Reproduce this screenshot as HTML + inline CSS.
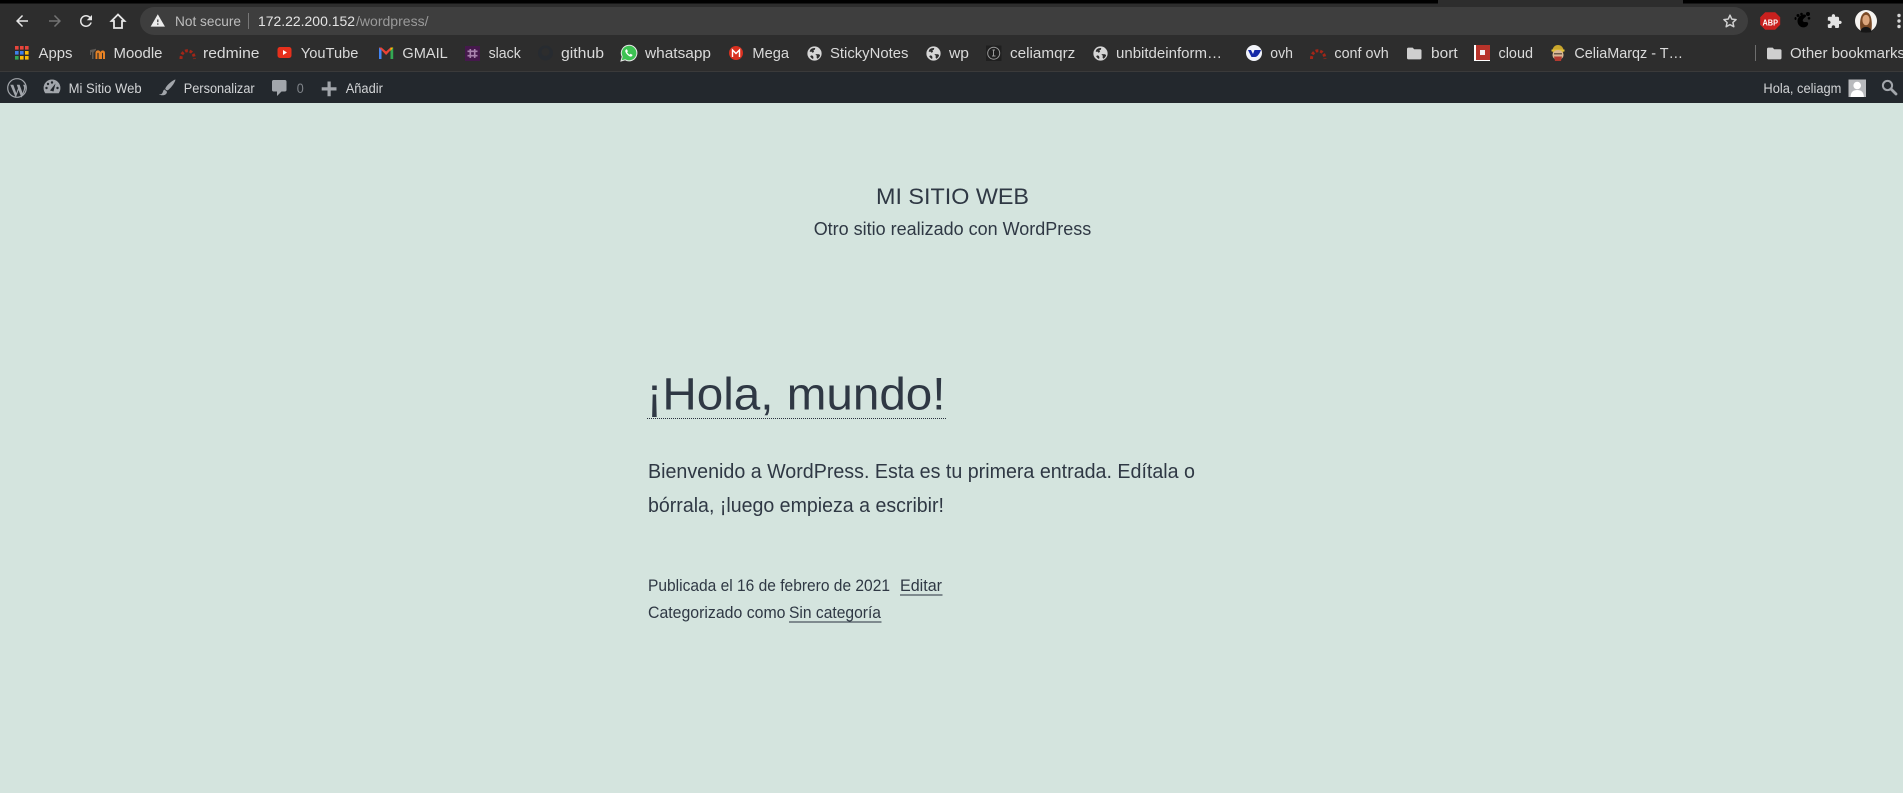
<!DOCTYPE html>
<html lang="es">
<head>
<meta charset="utf-8">
<title>Mi Sitio Web</title>
<style>
html,body{margin:0;padding:0;width:1903px;height:793px;overflow:hidden;background:#d4e4de}
svg{display:block}
text{font-family:"Liberation Sans",sans-serif;white-space:pre}
.b{font-size:14.5px;fill:#dadada}
.a{font-size:13.5px;fill:#d2d4d6}
.p{fill:#2f3844}
</style>
</head>
<body>
<svg width="1903" height="793" viewBox="0 0 1903 793" xmlns="http://www.w3.org/2000/svg">
<defs>
<symbol id="globe" viewBox="0 0 16 16"><circle cx="8" cy="8" r="7.6" fill="#d6d6d6"/><path d="M4 3.400C5.500 2.400 7.500 2 8.800 2.200L8.400 3.800 6.800 4.800 7.600 6.200 5.800 7.200 4.800 6 3 6.200C2.900 5.200 3.300 4.200 4 3.400ZM9.400 8.600l3.600.2 1 1.200c-.5 1.600-1.500 2.800-3 3.600l-.8-1.400.3-2-1.300-.8ZM4.400 10l2 .5.5 2-.5 1.300C5.200 13.300 4 12.300 3.400 11.100Z" fill="#2d2d2d"/></symbol>
<symbol id="folder" viewBox="0 0 16 14"><path d="M1.500 1h4.800l1.600 1.800h6.600c.8 0 1.500.6 1.500 1.400v8.300c0 .8-.7 1.500-1.500 1.500H1.500C.7 14 0 13.300 0 12.500v-10C0 1.700.7 1 1.500 1Z" fill="#cfcfcf"/></symbol>
</defs>

<!-- browser chrome -->
<rect width="1903" height="71" fill="#2d2d2d"/>
<rect width="1438" height="3.500" fill="#000"/>
<rect x="1683" width="220" height="3.500" fill="#000"/>
<rect x="140" y="7" width="1608" height="28" rx="14" fill="#3e3e3e"/>

<g fill="#e6e6e6">
<path transform="translate(13 12) scale(.75)" d="M20 11H7.830l5.590-5.590L12 4l-8 8 8 8 1.410-1.410L7.830 13H20v-2z"/>
<path transform="translate(64 12) scale(-.75 .75)" fill="#737373" d="M20 11H7.830l5.590-5.590L12 4l-8 8 8 8 1.410-1.410L7.830 13H20v-2z"/>
<path transform="translate(77 12) scale(.75)" d="M17.650 6.350C16.200 4.900 14.210 4 12 4c-4.420 0-7.990 3.580-7.990 8s3.570 8 7.990 8c3.730 0 6.840-2.550 7.730-6h-2.080c-.82 2.330-3.040 4-5.650 4-3.310 0-6-2.690-6-6s2.690-6 6-6c1.660 0 3.140.69 4.220 1.780L13 11h7V4l-2.350 2.350z"/>
</g>
<path d="M118 14.500 L111.500 21H114V28H122V21H124.500Z" fill="none" stroke="#e6e6e6" stroke-width="1.800" stroke-linejoin="miter"/>
<path transform="translate(150 13) scale(.65)" fill="#ececec" d="M1 21h22L12 2 1 21zm12-3h-2v-2h2v2zm0-4h-2v-4h2v4z"/>
<text x="175" y="26" textLength="66" lengthAdjust="spacingAndGlyphs" font-size="14" fill="#bdbdbd">Not secure</text>
<rect x="248" y="13" width="1" height="16" fill="#777"/>
<text x="258" y="26" textLength="97" lengthAdjust="spacingAndGlyphs" font-size="14" fill="#e4e4e4">172.22.200.152</text>
<text x="356" y="26" textLength="72.500" lengthAdjust="spacingAndGlyphs" font-size="14" fill="#9a9a9a">/wordpress/</text>
<path d="M1730 15.200l1.800 3.900 4.300.5-3.200 2.900.9 4.200-3.800-2.100-3.800 2.100.9-4.200-3.200-2.900 4.300-.5Z" fill="none" stroke="#d0d0d0" stroke-width="1.500" stroke-linejoin="round"/>

<!-- extensions -->
<path d="M1765 13h10l5 5v7.500l-5 5h-10l-5-5V18Z" fill="#c8201e" transform="translate(.2 -.8)"/>
<text x="1762.500" y="25.500" textLength="15.500" lengthAdjust="spacingAndGlyphs" font-size="8" font-weight="700" fill="#fff">ABP</text>
<g fill="#000">
<path d="M1797.500 21c0-3.500 3-6.500 7-6.500 1.500 0 2 1.500 1 2.500-2 1.500-3.500 3-2.300 4.500 1.200 1.200 3.200 0 4.500 1 1 1 .3 3.200-1.700 4.300-3.800 2-8.500-1-8.500-5.800Z"/>
<circle cx="1798" cy="15.500" r="1.500"/><circle cx="1801.500" cy="14" r="1.300"/><circle cx="1808" cy="14" r="2"/><circle cx="1809" cy="18.300" r="1.300"/><ellipse cx="1795.500" cy="18.500" rx="1" ry="1.500"/>
</g>
<path transform="translate(1826.500 13.500) scale(.66)" fill="#e4e4e4" d="M20.500 11H19V7c0-1.100-.9-2-2-2h-4V3.500C13 2.120 11.880 1 10.500 1S8 2.120 8 3.500V5H4c-1.100 0-1.990.9-1.990 2v3.800H3.500c1.490 0 2.700 1.210 2.700 2.700s-1.210 2.700-2.700 2.700H2V20c0 1.100.9 2 2 2h3.800v-1.500c0-1.490 1.210-2.700 2.700-2.700 1.490 0 2.700 1.210 2.700 2.700V22H17c1.100 0 2-.9 2-2v-4h1.500c1.380 0 2.500-1.120 2.500-2.500S21.880 11 20.500 11z"/>
<circle cx="1866" cy="21" r="11" fill="#f6f4f1"/>
<path d="M1860.500 30c-1-7-.8-16.500 5.500-18 6 1 6.300 11 5.500 18-2 1-9 1-11 0Z" fill="#7a4a26"/>
<ellipse cx="1866" cy="20" rx="3.600" ry="5.300" fill="#dca67c"/>
<path d="M1860.500 32c.5-4 2.800-5 5.500-5s5 1 5.500 5c-3 .8-8 .8-11 0Z" fill="#161616"/>
<g fill="#d8d8d8"><circle cx="1899" cy="15.500" r="1.700"/><circle cx="1899" cy="21" r="1.700"/><circle cx="1899" cy="26.500" r="1.700"/></g>

<!-- bookmarks bar -->
<g>
<g fill="#e8453c"><rect x="15" y="46" width="3.600" height="3.600"/><rect x="15" y="51" width="3.600" height="3.600" fill="#3f80ea"/><rect x="15" y="56" width="3.600" height="3.600" fill="#34a853"/><rect x="20" y="46" width="3.600" height="3.600"/><rect x="20" y="51" width="3.600" height="3.600" fill="#3f80ea"/><rect x="20" y="56" width="3.600" height="3.600" fill="#fbbc05"/><rect x="25" y="46" width="3.600" height="3.600"/><rect x="25" y="51" width="3.600" height="3.600" fill="#fbbc05"/><rect x="25" y="56" width="3.600" height="3.600" fill="#fbbc05"/></g>
<text class="b" x="38.500" y="58" textLength="34" lengthAdjust="spacingAndGlyphs">Apps</text>

<path d="M90 50 96 48.800v1.200L93.500 52.500V59H92V52.500L91 52V55H90Z" fill="#5f5a55"/>
<path d="M95.500 59v-6c0-3.500 5-3.500 5 0v6h-1.900v-5.500c0-1-1.200-1-1.200 0V59ZM100.300 59v-6c0-3 4.700-3.500 4.700 0v6h-2v-5.500c0-1-1-1-1 0V59Z" fill="#e58124"/>
<text class="b" x="113.500" y="58" textLength="49" lengthAdjust="spacingAndGlyphs">Moodle</text>

<path d="M181 59C181 48 194 48 194.500 59" fill="none" stroke="#a32618" stroke-width="3" stroke-dasharray="2.800 1.800"/>
<text class="b" x="203" y="58" textLength="56.500" lengthAdjust="spacingAndGlyphs">redmine</text>

<rect x="277.500" y="47" width="14" height="11" rx="2.500" fill="#e6301c"/><path d="M283 50l4 2.500-4 2.500Z" fill="#fff"/>
<text class="b" x="300.800" y="58" textLength="57.600" lengthAdjust="spacingAndGlyphs">YouTube</text>

<path d="M379 47.500h2.500V59H379Z" fill="#4285f4"/><path d="M390.500 47.500h2.700V59h-2.700Z" fill="#34a853"/><path d="M379 47.500h2.500l4.600 4 4.400-4h2.700l-7.100 7.500Z" fill="#ea4335"/><path d="M390.500 47.500h2.700l-2.700 3.500Z" fill="#fbbc05"/>
<text class="b" x="402.400" y="58" textLength="45.400" lengthAdjust="spacingAndGlyphs">GMAIL</text>

<rect x="465" y="46" width="15" height="15" fill="#45194c"/><path d="M470.300 49v9M474.700 49v9M467.500 51.300h10M467.500 55.700h10" stroke="#a984ae" stroke-width="1.600"/>
<text class="b" x="488.600" y="58" textLength="32.200" lengthAdjust="spacingAndGlyphs">slack</text>

<circle cx="545.500" cy="53" r="7.500" fill="#272b30"/><circle cx="545.500" cy="52" r="4" fill="#2d2d2d"/>
<text class="b" x="561" y="58" textLength="43" lengthAdjust="spacingAndGlyphs">github</text>

<path d="M621 61l1.200-4.300a7.800 7.800 0 1 1 3 3.100Z" fill="#3dc253" stroke="#e8e8e8" stroke-width="1"/>
<path d="M626 49.500c-1 .7-1 2 0 3.500s3 3.500 4.800 3.600c1.200 0 1.700-1 1.700-1.700l-1.900-1.100-.9.900c-1-.4-2-1.400-2.600-2.500l.8-.9-1-2.100Z" fill="#fff"/>
<text class="b" x="645" y="58" textLength="66" lengthAdjust="spacingAndGlyphs">whatsapp</text>

<circle cx="736" cy="53" r="7" fill="#d9301f"/><path d="M732.500 57v-7l3.500 3.500 3.500-3.500v7" fill="none" stroke="#fff" stroke-width="1.400"/>
<text class="b" x="752.400" y="58" textLength="36.600" lengthAdjust="spacingAndGlyphs">Mega</text>

<use href="#globe" x="807" y="46" width="15" height="15"/>
<text class="b" x="830" y="58" textLength="78.400" lengthAdjust="spacingAndGlyphs">StickyNotes</text>

<use href="#globe" x="926" y="46" width="15" height="15"/>
<text class="b" x="949" y="58" textLength="20" lengthAdjust="spacingAndGlyphs">wp</text>

<rect x="986" y="45.500" width="15.500" height="15.500" fill="#1f1f1f"/><circle cx="993.700" cy="53.200" r="6" fill="none" stroke="#9a9a9a"/><path d="M992.500 50h2.500M993.500 50v6M992 56h3.500" stroke="#9a9a9a" fill="none"/>
<text class="b" x="1010" y="58" textLength="65.300" lengthAdjust="spacingAndGlyphs">celiamqrz</text>

<use href="#globe" x="1093" y="46" width="15" height="15"/>
<text class="b" x="1116" y="58" textLength="106" lengthAdjust="spacingAndGlyphs">unbitdeinform…</text>

<circle cx="1254" cy="53" r="8" fill="#f2f4fa"/><path d="M1248 50h3l2 4 1.500-4h6.500c-1 3-3.500 7-6 7h-3.500Z" fill="#1428a8"/>
<text class="b" x="1270.300" y="58" textLength="22.700" lengthAdjust="spacingAndGlyphs">ovh</text>

<path d="M1311.500 59C1311.500 48 1324.500 48 1325 59" fill="none" stroke="#a32618" stroke-width="3" stroke-dasharray="2.800 1.800"/>
<text class="b" x="1334.400" y="58" textLength="54.300" lengthAdjust="spacingAndGlyphs">conf ovh</text>

<use href="#folder" x="1407" y="46" width="14.500" height="14"/>
<text class="b" x="1431" y="58" textLength="26.700" lengthAdjust="spacingAndGlyphs">bort</text>

<rect x="1474" y="45" width="16" height="16" fill="#fff"/><rect x="1476" y="45" width="14" height="15" fill="#b7332a"/><rect x="1480" y="50" width="5" height="5" fill="#f4f4f4"/>
<text class="b" x="1498.500" y="58" textLength="34.500" lengthAdjust="spacingAndGlyphs">cloud</text>

<circle cx="1558" cy="50.500" r="5.500" fill="#c9a62c"/><rect x="1551.500" y="49.500" width="13" height="2" fill="#e2c23e"/><ellipse cx="1558" cy="55" rx="5.500" ry="5" fill="#d9b694"/><path d="M1554 56.500h8l-1 4.500h-6Z" fill="#b23a30"/><rect x="1554" y="53" width="8" height="1.500" fill="#6b5a4a"/>
<text class="b" x="1574.400" y="58" textLength="108.600" lengthAdjust="spacingAndGlyphs">CeliaMarqz - T…</text>

<rect x="1755" y="45" width="1" height="16" fill="#6e6e6e"/>
<use href="#folder" x="1767" y="46" width="14.500" height="14"/>
<text class="b" x="1790" y="58" textLength="115" lengthAdjust="spacingAndGlyphs">Other bookmarks</text>
</g>
<rect y="71" width="1903" height="1" fill="#3a3a3a"/>

<!-- wp admin bar -->
<rect y="72" width="1903" height="31" fill="#23282d"/>
<g fill="#a2a6ab">
<circle cx="17" cy="88" r="9.300" fill="none" stroke="#a2a6ab" stroke-width="1.200"/>
<path d="M10.300 84.800h3l3 8.300 1.700-4.800-1.200-3.500h2.800l3 8.300 1.300-3.800c.6-2-.4-3-.8-4.500h2c1.200 3 .4 4.600-3.600 13l-3-7.800-2.700 7.800Z"/>
<path d="M52 79.500a8.500 8.500 0 0 0-8.400 8.500c0 2 .6 3.800 1.700 5.200h13.400a8.500 8.500 0 0 0 1.700-5.200A8.500 8.500 0 0 0 52 79.500Z"/>
</g>
<g fill="#23282d"><circle cx="46.500" cy="88" r="1.200"/><circle cx="48" cy="84" r="1.200"/><circle cx="52" cy="82.500" r="1.200"/><circle cx="57.500" cy="88" r="1.200"/><path d="M50 90.500 55.500 83.500 53.500 91.500Z"/></g>
<text class="a" x="68.600" y="93" textLength="73" lengthAdjust="spacingAndGlyphs">Mi Sitio Web</text>
<path d="M175.500 79.500c-2 .3-8 4.500-10 8.500-1 1.300 1.500 3 2.700 2 3.700-3 7-8 7.300-10.500ZM164.500 89.500c-2 1-1 3-3 4.500-1 .6-2 .3-2.500.5 3 1.400 7.700 1 8-2.800Z" fill="#a2a6ab"/>
<text class="a" x="183.700" y="93" textLength="71" lengthAdjust="spacingAndGlyphs">Personalizar</text>
<path d="M273.500 80h11.500c.8 0 1.500.7 1.500 1.500v8.500c0 .8-.7 1.500-1.500 1.500h-3.500l-4.500 4.500v-4.500h-3.500c-.8 0-1.500-.7-1.500-1.500v-8.500c0-.8.7-1.500 1.500-1.500Z" fill="#a2a6ab"/>
<text x="296.700" y="93" textLength="7" lengthAdjust="spacingAndGlyphs" font-size="13.500" fill="#7f8489">0</text>
<path d="M327.500 81.500h3.200v5.800h5.800v3.200h-5.800v5.800h-3.200v-5.800h-5.800v-3.200h5.800Z" fill="#a2a6ab"/>
<text class="a" x="345.700" y="93" textLength="37.200" lengthAdjust="spacingAndGlyphs">Añadir</text>
<text class="a" x="1763.400" y="93" textLength="78" lengthAdjust="spacingAndGlyphs">Hola, celiagm</text>
<rect x="1848.500" y="79.500" width="17.500" height="17.500" fill="#b8babd"/>
<circle cx="1857.200" cy="85.500" r="3.800" fill="#fff"/><path d="M1850.500 97c.3-5.500 3-7 6.700-7s6.400 1.500 6.700 7Z" fill="#fff"/>
<circle cx="1887.500" cy="85.500" r="4.600" fill="none" stroke="#a2a6ab" stroke-width="2"/>
<path d="M1891 89l5 5" stroke="#a2a6ab" stroke-width="2.800" stroke-linecap="round"/>

<!-- page content -->
<text class="p" x="876" y="204" textLength="153" lengthAdjust="spacingAndGlyphs" font-size="22.500">MI SITIO WEB</text>
<text class="p" x="813.700" y="235" textLength="277.500" lengthAdjust="spacingAndGlyphs" font-size="18.500">Otro sitio realizado con WordPress</text>

<text class="p" x="646.500" y="409.500" textLength="299" lengthAdjust="spacingAndGlyphs" font-size="45.500">¡Hola, mundo!</text>
<line x1="647" y1="418.500" x2="946" y2="418.500" stroke="#28303d" stroke-width="1" stroke-dasharray="1 1"/>

<text class="p" x="648" y="478" textLength="547" lengthAdjust="spacingAndGlyphs" font-size="20.500">Bienvenido a WordPress. Esta es tu primera entrada. Edítala o</text>
<text class="p" x="648" y="512" textLength="296" lengthAdjust="spacingAndGlyphs" font-size="20.500">bórrala, ¡luego empieza a escribir!</text>

<text class="p" x="648" y="591" textLength="242" lengthAdjust="spacingAndGlyphs" font-size="17">Publicada el 16 de febrero de 2021</text>
<text class="p" x="900" y="591" textLength="42" lengthAdjust="spacingAndGlyphs" font-size="17">Editar</text>
<rect x="900" y="594.500" width="42.500" height="1" fill="#28303d"/>
<text class="p" x="648" y="618" textLength="137.500" lengthAdjust="spacingAndGlyphs" font-size="17">Categorizado como</text>
<text class="p" x="789" y="618" textLength="92" lengthAdjust="spacingAndGlyphs" font-size="17">Sin categoría</text>
<rect x="789" y="621.500" width="92.500" height="1" fill="#28303d"/>
</svg>
</body>
</html>
